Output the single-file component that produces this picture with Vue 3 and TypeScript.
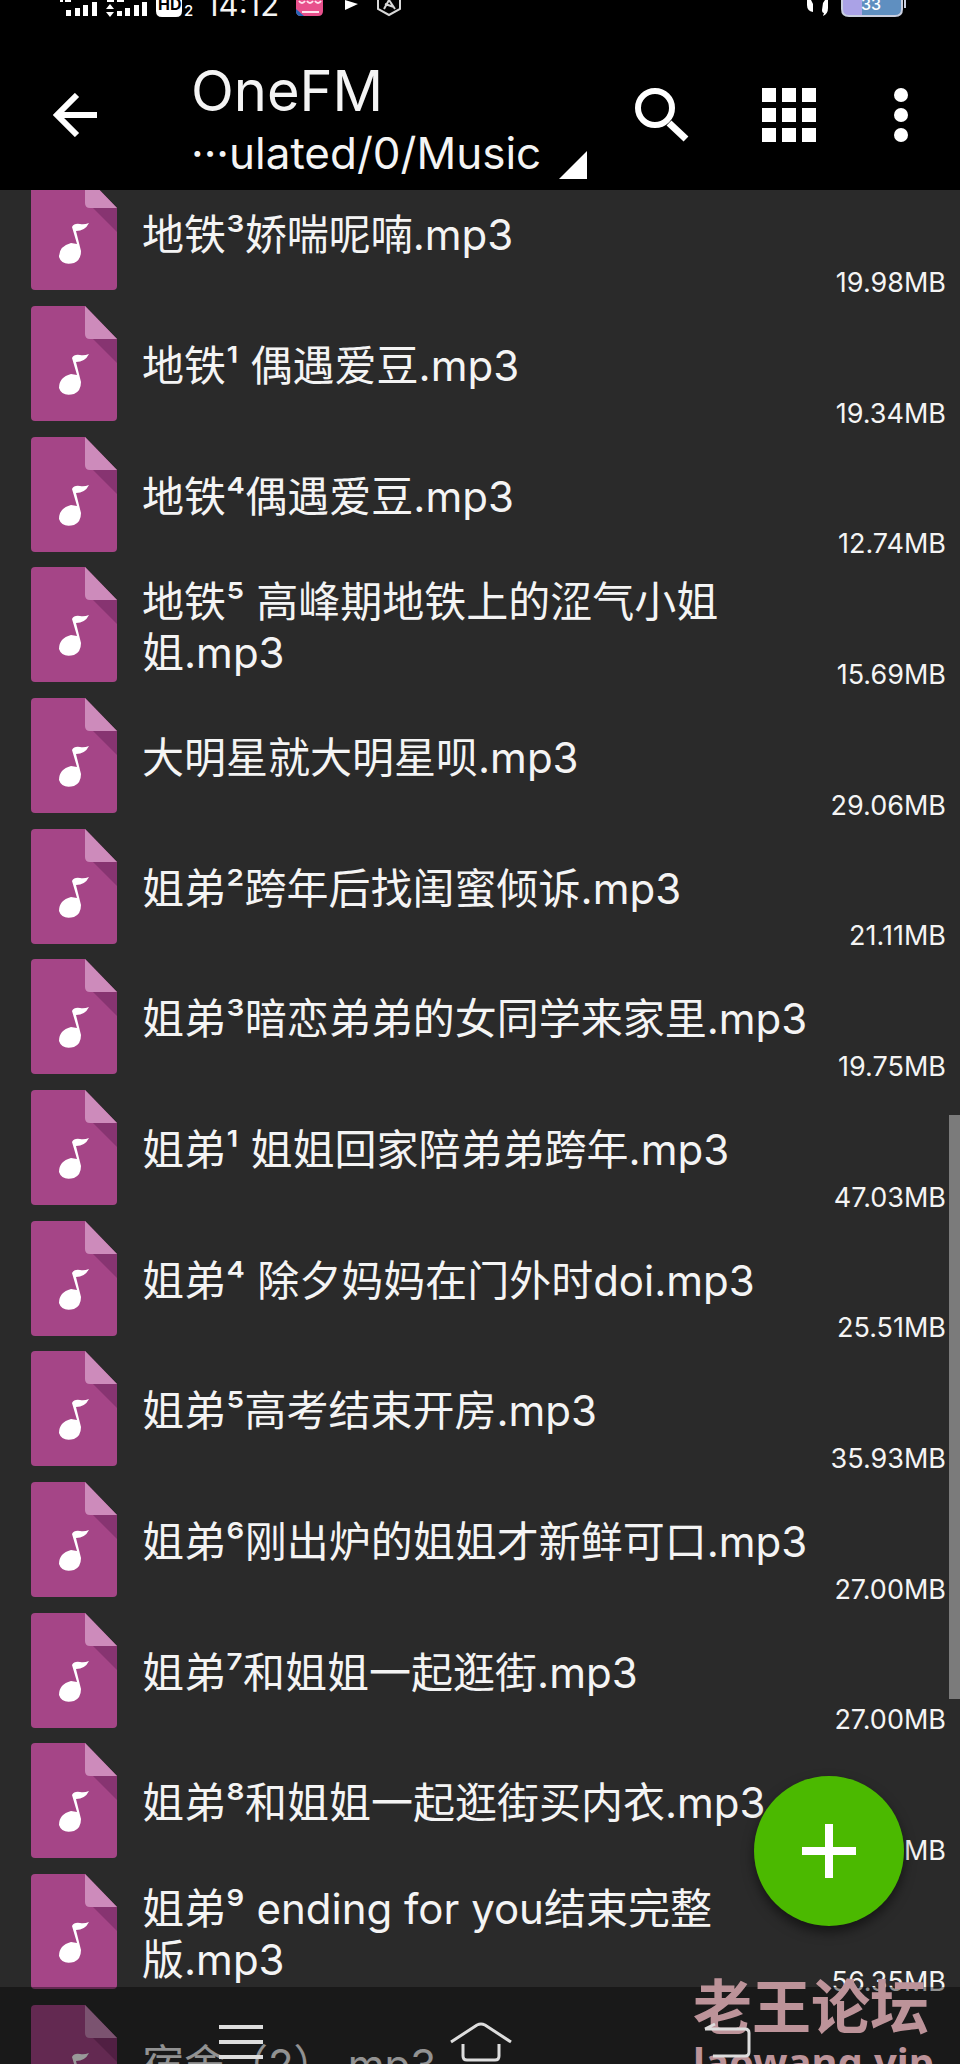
<script setup lang="ts">
interface AudioFile {
  name: string
  size: string
}

const files: AudioFile[] = [
  { name: '地铁³娇喘呢喃.mp3', size: '19.98MB' },
  { name: '地铁¹ 偶遇爱豆.mp3', size: '19.34MB' },
  { name: '地铁⁴偶遇爱豆.mp3', size: '12.74MB' },
  { name: '地铁⁵ 高峰期地铁上的涩气小姐姐.mp3', size: '15.69MB' },
  { name: '大明星就大明星呗.mp3', size: '29.06MB' },
  { name: '姐弟²跨年后找闺蜜倾诉.mp3', size: '21.11MB' },
  { name: '姐弟³暗恋弟弟的女同学来家里.mp3', size: '19.75MB' },
  { name: '姐弟¹ 姐姐回家陪弟弟跨年.mp3', size: '47.03MB' },
  { name: '姐弟⁴ 除夕妈妈在门外时doi.mp3', size: '25.51MB' },
  { name: '姐弟⁵高考结束开房.mp3', size: '35.93MB' },
  { name: '姐弟⁶刚出炉的姐姐才新鲜可口.mp3', size: '27.00MB' },
  { name: '姐弟⁷和姐姐一起逛街.mp3', size: '27.00MB' },
  { name: '姐弟⁸和姐姐一起逛街买内衣.mp3', size: 'MB' },
  { name: '姐弟⁹ ending for you结束完整版.mp3', size: '56.35MB' },
  { name: '宿舍（2）.mp3', size: '' },
]

const gridCells = [0, 20, 40]
</script>

<template>
  <div class="screen">
    <header class="top">
      <div class="status">
        <svg class="signals" viewBox="0 0 140 20" width="140" height="20" aria-hidden="true">
          <g fill="#fff">
            <rect x="2" y="0" width="3" height="2" /><rect x="7" y="0" width="6" height="2" />
            <rect x="8" y="10" width="5" height="6" /><rect x="17" y="8" width="5" height="8" />
            <rect x="25" y="5" width="5" height="11" /><rect x="34" y="2" width="5" height="14" />
            <rect x="49" y="0" width="7" height="2" /><rect x="59" y="0" width="7" height="2" />
            <path d="M52 4l4 5h-8zM52 17l4-5h-8z" />
            <rect x="59" y="11" width="5" height="5" /><rect x="67" y="8" width="5" height="8" />
            <rect x="76" y="5" width="5" height="11" /><rect x="84" y="2" width="5" height="14" />
            <path d="M98 0h26v11q0 6-6 6h-14q-6 0-6-6z" />
          </g>
          <text x="100" y="10" font-size="16" font-weight="700" fill="#000">HD</text>
          <text x="126" y="16" font-size="15" font-weight="500" fill="#fff">2</text>
        </svg>
        <time class="clock">14:12</time>
        <svg class="notices" viewBox="0 0 110 20" width="110" height="20" aria-hidden="true">
          <path d="M0 0h27v11q0 5-5 5H5q-5 0-5-5z" fill="#e8508c" />
          <path d="M0 9l8 7H5q-5 0-5-5z" fill="#2467b8" />
          <path d="M3 1q3 4 6 0M11 1q3 4 6 0M19 1q3 4 6 0M6 12h17" stroke="#ffe3ee" stroke-width="2" fill="none" />
          <path d="M49 0l13 4-13 6z" fill="#fff" />
          <path d="M82 0v9l11 6 11-6V0M88 9l5-9 6 9M89 4l9 3" stroke="#d8d8d8" stroke-width="2" fill="none" />
        </svg>
        <svg class="power" viewBox="0 0 102 20" width="102" height="20" aria-hidden="true">
          <path d="M1 0h4l2 4v8q-6-1-6-7zM17 3l2-3h3v8q0 6-5 8l1-3q-2 0-2-3z" fill="#fff" />
          <path d="M36 0h60v9q0 7-7 7H43q-7 0-7-7z" fill="#5f8fc0" />
          <path d="M36 0h20v16H43q-7 0-7-7z" fill="#aaa2e6" />
          <path d="M36 0v9q0 7 7 7h46q7 0 7-7V0M99 0v8" fill="none" stroke="#c9cfe0" stroke-width="2" />
          <text x="55" y="10" font-size="16" font-weight="500" fill="#fff">33</text>
        </svg>
      </div>
      <div class="bar">
        <button class="icon-btn back" aria-label="返回">
          <svg viewBox="0 0 44 44" width="44" height="44"><path d="M24 2L4 22l20 20M4 22h40" fill="none" stroke="#fff" stroke-width="6" /></svg>
        </button>
        <button class="location">
          <span class="title">OneFM</span>
          <span class="path">···ulated/0/Music</span>
          <svg class="corner" viewBox="0 0 28 28" width="28" height="28" aria-hidden="true"><path d="M28 0v28H0z" fill="#fff" /></svg>
        </button>
        <button class="icon-btn search" aria-label="搜索">
          <svg viewBox="0 0 54 54" width="54" height="54">
            <circle cx="20" cy="20" r="17" fill="none" stroke="#fff" stroke-width="6" />
            <path d="M34 35l17 16" stroke="#fff" stroke-width="7" />
          </svg>
        </button>
        <button class="icon-btn view" aria-label="网格视图">
          <svg viewBox="0 0 54 54" width="54" height="54" fill="#fff">
            <template v-for="y in gridCells" :key="y">
              <rect v-for="x in gridCells" :key="x" :x="x" :y="y" width="14" height="14" />
            </template>
          </svg>
        </button>
        <button class="icon-btn more" aria-label="更多">
          <svg viewBox="0 0 14 54" width="14" height="54" fill="#fff"><circle cx="7" cy="7" r="7" /><circle cx="7" cy="27" r="7" /><circle cx="7" cy="47" r="7" /></svg>
        </button>
      </div>
    </header>

    <main class="scroller">
      <ul class="files">
        <li v-for="file in files" :key="file.name" class="file">
          <svg class="doc" viewBox="0 0 86 115" width="86" height="115" aria-hidden="true">
            <path d="M4 0h50l32 33v78q0 4-4 4H4q-4 0-4-4V4q0-4 4-4z" fill="#a54587" />
            <path d="M62 33h24v24z" fill="#873471" />
            <path d="M54 0l32 33H59q-5 0-5-5z" fill="#cd8bbb" />
            <path d="M41 52Q43 48 49 49Q53 50 58 48Q54 56 45 56L50 76Q50 85 43 88Q31 91 28 82Q28 71 40 68L46 69Z" fill="#fff" />
          </svg>
          <span class="name">{{ file.name }}</span>
          <span class="size">{{ file.size }}</span>
        </li>
      </ul>
      <div class="thumb"></div>
    </main>

    <button class="fab" aria-label="新建">
      <svg viewBox="0 0 54 54" width="54" height="54"><path d="M27 0v54M0 27h54" stroke="#fff" stroke-width="8" /></svg>
    </button>

    <div class="nav-scrim"></div>
    <div class="watermark">
      <span class="mark-name">老王论坛</span>
      <span class="mark-site">laowang.vip</span>
    </div>

    <nav class="nav">
      <button class="nav-btn" aria-label="最近任务">
        <svg viewBox="0 0 64 40" width="64" height="40"><path d="M10 5h44M10 20h44M10 35h44" stroke="#ddd" stroke-width="4" /></svg>
      </button>
      <button class="nav-btn" aria-label="主屏幕">
        <svg viewBox="0 0 64 40" width="64" height="40"><path d="M2 20L28 3q4-2 8 0l26 17M14 22v12q0 4 4 4h28q4 0 4-4V22" fill="none" stroke="#ddd" stroke-width="3" /></svg>
      </button>
      <button class="nav-btn" aria-label="返回上一页">
        <svg viewBox="0 0 64 40" width="64" height="40"><path d="M16 7h40q4 0 4 4v19q0 4-4 4H24M26 2l-10 5" fill="none" stroke="#ddd" stroke-width="3" /></svg>
      </button>
    </nav>
  </div>
</template>

<style>
body {
  background: #2a2a2a;
}
</style>

<style scoped>
.screen {
  position: relative;
  display: flex;
  flex-direction: column;
  height: 100vh;
  overflow: hidden;
  background: #2a2a2a;
  color: #f4f4f4;
  font-family: Inter, "Noto Sans CJK SC", sans-serif;
}
button {
  padding: 0;
  border: 0;
  background: none;
  color: inherit;
  font: inherit;
  cursor: pointer;
}
svg {
  display: block;
  flex: none;
}
.top {
  flex: none;
  background: #000;
  padding-bottom: 8px;
}
.status {
  display: flex;
  height: 40px;
  padding: 0 52px 0 58px;
}
.clock {
  width: 88px;
  margin-left: 8px;
  font-size: 31px;
  line-height: 10px;
}
.notices {
  margin-left: 2px;
}
.power {
  margin-left: auto;
}
.bar {
  display: flex;
  align-items: center;
  height: 142px;
  padding: 0 52px 0 53px;
}
.icon-btn {
  display: flex;
  align-items: center;
  height: 142px;
  padding-top: 8px;
}
.location {
  display: grid;
  grid-template-columns: auto 28px;
  column-gap: 18px;
  margin-left: 94px;
  margin-right: auto;
  padding-top: 16px;
  text-align: left;
  white-space: nowrap;
}
.title {
  grid-column: 1 / 3;
  font-size: 56px;
  line-height: 68px;
}
.path {
  font-size: 44px;
  line-height: 56px;
}
.corner {
  align-self: end;
  margin-bottom: 2px;
}
.view {
  margin-left: 73px;
}
.more {
  margin-left: 78px;
}
.scroller {
  position: relative;
  flex: 1;
  min-height: 0;
  overflow: hidden;
}
.files {
  display: grid;
  grid-auto-rows: 131px 131px 130px;
  margin: -23px 0 0;
  padding: 0;
  list-style: none;
}
.file {
  display: flex;
  align-items: center;
  padding: 0 14px 0 31px;
}
.name {
  flex: 1;
  margin-left: 25px;
  padding-top: 4px;
  font-size: 42px;
  line-height: 51px;
}
.size {
  align-self: flex-end;
  width: 116px;
  padding-bottom: 4px;
  font-size: 27px;
  line-height: 22px;
  text-align: right;
}
.thumb {
  position: absolute;
  top: 925px;
  right: 0;
  width: 11px;
  height: 584px;
  background: #7b7b7b;
}
.fab {
  position: absolute;
  right: 56px;
  bottom: 138px;
  display: grid;
  place-items: center;
  width: 150px;
  height: 150px;
  border-radius: 50%;
  background: #4bb900;
  box-shadow: 0 6px 12px rgba(0, 0, 0, 0.5);
}
.nav-scrim,
.nav {
  position: absolute;
  inset: auto 0 0;
  height: 77px;
}
.nav-scrim {
  background: rgba(0, 0, 0, 0.4);
}
.nav {
  display: flex;
  justify-content: space-between;
  padding: 0 207px 0 209px;
}
.nav-btn {
  padding-top: 32px;
}
.watermark {
  position: absolute;
  bottom: -16px;
  right: 26px;
  color: #bc9399;
  font-weight: 700;
}
.mark-name,
.mark-site {
  display: block;
}
.mark-name {
  font-size: 59px;
  line-height: 72px;
}
.mark-site {
  font-family: "Noto Sans", sans-serif;
  font-size: 40px;
  line-height: 36px;
}
</style>
